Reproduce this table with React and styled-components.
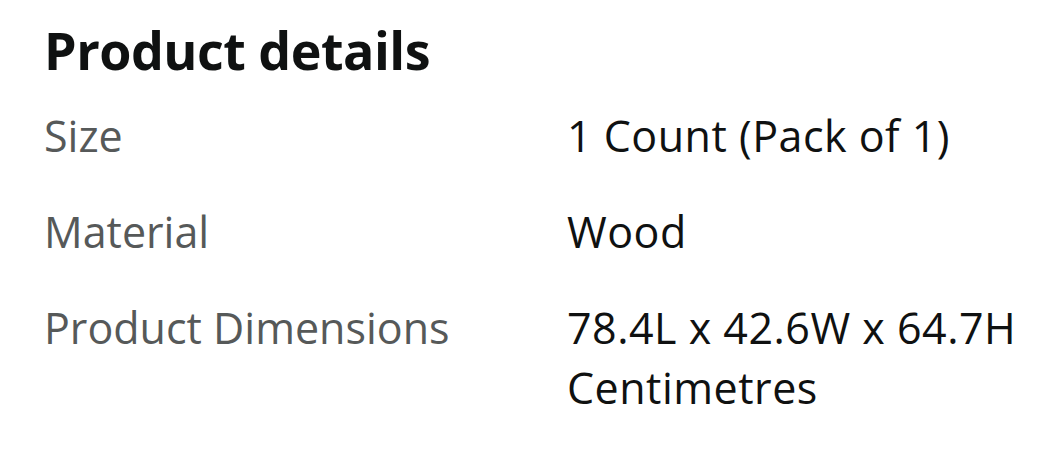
import React from "react";
import styled, { createGlobalStyle } from "styled-components";

const Global = createGlobalStyle`
  html, body { margin: 0; padding: 0; background: #fff; }
  body { font-family: "Open Sans", "Noto Sans", sans-serif; }
`;

const Section = styled.section`
  padding: 18px 0 0 44px;
`;

const Heading = styled.h2`
  margin: 0 0 24px;
  font-size: 52px;
  line-height: 64px;
  font-weight: 700;
  color: #0f1111;
  letter-spacing: -0.5px;
`;

const Table = styled.div`
  display: grid;
  grid-template-columns: 523px 1fr;
  row-gap: 36px;
`;

const Label = styled.div`
  font-size: 43px;
  line-height: 60px;
  color: #565959;
`;

const Value = styled.div`
  font-size: 43px;
  line-height: 60px;
  color: #0f1111;
  letter-spacing: 0.5px;
  max-width: 470px;
`;

const rows = [
  ["Size", "1 Count (Pack of 1)"],
  ["Material", "Wood"],
  ["Product Dimensions", "78.4L x 42.6W x 64.7H Centimetres"],
];

export default function App() {
  return (
    <>
      <Global />
      <Section>
        <Heading>Product details</Heading>
        <Table>
          {rows.map(([k, v]) => (
            <React.Fragment key={k}>
              <Label>{k}</Label>
              <Value>{v}</Value>
            </React.Fragment>
          ))}
        </Table>
      </Section>
    </>
  );
}
